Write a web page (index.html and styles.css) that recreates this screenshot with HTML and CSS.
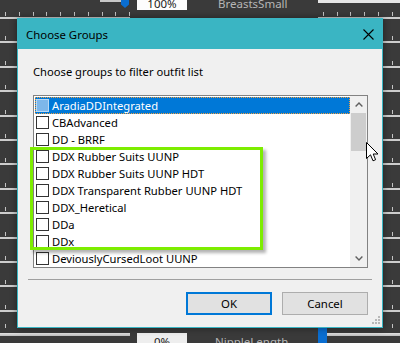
FILE: index.html
```html
<!DOCTYPE html>
<html lang="en">
<head>
    <meta charset="UTF-8">
    <title>Choose Groups</title>
    <link rel="stylesheet" href="styles.css">
</head>
<body>
    <div class="page">
        <!-- slider list behind the dialog -->
        <div class="strip-top">
            <span class="track-stub"></span>
            <span class="thumb"></span>
            <span class="value-box">100%</span>
            <span class="slider-label">BreastsSmall</span>
            <span class="edge-box"></span>
        </div>
        <div class="srow"><div class="slider left"><div class="ticks"></div><div class="track"></div></div><div class="slider right"><div class="ticks"></div><div class="track"></div></div></div>
        <div class="srow"><div class="slider left"><div class="ticks"></div><div class="track"></div></div><div class="slider right"><div class="ticks"></div><div class="track"></div></div></div>
        <div class="srow"><div class="slider left"><div class="ticks"></div><div class="track"></div></div><div class="slider right"><div class="ticks"></div><div class="track"></div></div></div>
        <div class="srow"><div class="slider left"><div class="ticks"></div><div class="track"></div></div><div class="slider right"><div class="ticks"></div><div class="track"></div></div></div>
        <div class="srow"><div class="slider left"><div class="ticks"></div><div class="track"></div></div><div class="slider right"><div class="ticks"></div><div class="track"></div></div></div>
        <div class="srow"><div class="slider left"><div class="ticks"></div><div class="track"></div></div><div class="slider right"><div class="ticks"></div><div class="track"></div></div></div>
        <div class="srow"><div class="slider left"><div class="ticks"></div><div class="track"></div></div><div class="slider right"><div class="ticks"></div><div class="track"></div></div></div>
        <div class="srow"><div class="slider left"><div class="ticks"></div><div class="track"></div></div><div class="slider right"><div class="ticks"></div><div class="track"></div></div></div>
        <div class="srow"><div class="slider left"><div class="ticks"></div><div class="track"></div></div><div class="slider right"><div class="ticks"></div><div class="track"></div></div></div>
        <div class="srow"><div class="slider left"><div class="ticks"></div><div class="track"></div></div><div class="slider right"><div class="ticks"></div><div class="track"></div></div></div>
        <div class="srow"><div class="slider left"><div class="ticks"></div><div class="track"></div></div><div class="slider right"><div class="ticks"></div><div class="track"></div></div></div>
        <div class="srow"><div class="slider left"><div class="ticks"></div><div class="track"></div></div><div class="slider right"><div class="ticks"></div><div class="track"></div></div></div>
        <div class="srow"><div class="slider left"><div class="ticks"></div><div class="track"></div></div><div class="slider right"><div class="ticks"></div><div class="track"></div></div></div>
        <div class="strip-bottom">
            <div class="slider left"><div class="ticks"></div><div class="track thick"></div></div>
            <span class="value-box low">0%</span>
            <span class="slider-label low">NippleLength</span>
            <div class="slider right">
                <div class="ticks"></div>
                <div class="thumb-row"><span class="thumb-block"></span><span class="track thick"></span></div>
            </div>
        </div>

        <!-- the dialog -->
        <div class="dialog">
            <div class="titlebar">
                <span class="title">Choose Groups</span>
                <svg class="close" width="11" height="11" viewBox="0 0 11 11">
                    <path d="M0.5 0.5 L10.5 10.5 M10.5 0.5 L0.5 10.5" stroke="#000" stroke-width="1.1" fill="none"/>
                </svg>
            </div>
            <div class="dialog-body">
                <div class="prompt">Choose groups to filter outfit list</div>
                <div class="listbox">
                    <div class="items">
                        <div class="item selected"><span class="check"></span><span>AradiaDDIntegrated</span></div>
                        <div class="item"><span class="check"></span><span>CBAdvanced</span></div>
                        <div class="item"><span class="check"></span><span>DD - BRRF</span></div>
                        <div class="item"><span class="check"></span><span>DDX Rubber Suits UUNP</span></div>
                        <div class="item"><span class="check"></span><span>DDX Rubber Suits UUNP HDT</span></div>
                        <div class="item"><span class="check"></span><span>DDX Transparent Rubber UUNP HDT</span></div>
                        <div class="item"><span class="check"></span><span>DDX_Heretical</span></div>
                        <div class="item"><span class="check"></span><span>DDa</span></div>
                        <div class="item"><span class="check"></span><span>DDx</span></div>
                        <div class="item"><span class="check"></span><span>DeviouslyCursedLoot UUNP</span></div>
                    </div>
                    <div class="scrollbar">
                        <div class="sb-button">
                            <svg width="8" height="5" viewBox="0 0 8 5"><polyline points="0.6,4.4 4,1 7.4,4.4" stroke="#606060" stroke-width="1.4" fill="none"/></svg>
                        </div>
                        <div class="sb-thumb"></div>
                        <div class="sb-track"></div>
                        <div class="sb-button">
                            <svg width="8" height="5" viewBox="0 0 8 5"><polyline points="0.6,0.6 4,4 7.4,0.6" stroke="#606060" stroke-width="1.4" fill="none"/></svg>
                        </div>
                    </div>
                </div>
                <div class="separator"></div>
                <div class="buttons">
                    <button class="btn default">OK</button>
                    <button class="btn">Cancel</button>
                </div>
            </div>
            <svg class="grip" width="9" height="9" viewBox="0 0 9 9">
                <rect x="6" y="0" width="2" height="2" fill="#b8b8b8"/>
                <rect x="3" y="3" width="2" height="2" fill="#b8b8b8"/>
                <rect x="6" y="3" width="2" height="2" fill="#b8b8b8"/>
                <rect x="0" y="6" width="2" height="2" fill="#b8b8b8"/>
                <rect x="3" y="6" width="2" height="2" fill="#b8b8b8"/>
                <rect x="6" y="6" width="2" height="2" fill="#b8b8b8"/>
            </svg>
        </div>

        <!-- annotation and mouse pointer on top -->
        <div class="highlight"></div>
        <svg class="cursor" width="13" height="20" viewBox="0 0 13 20">
            <path d="M0.5 0.5 L0.5 16.5 L4.5 12.8 L7 18.8 L9.6 17.7 L7.2 12 L12 12 Z" fill="#fff" stroke="#000" stroke-width="1" stroke-linejoin="miter"/>
        </svg>
    </div>
</body>
</html>
```

FILE: styles.css
```css
body {
    margin: 0;
    font-family: "Noto Sans", sans-serif;
    font-size: 11.2px;
}
.page {
    position: relative;
    width: 400px;
    height: 343px;
    overflow: hidden;
    background: #3a3a3a;
    display: flex;
    flex-direction: column;
}

/* background slider rows */
.strip-top {
    height: 11px;
    flex-shrink: 0;
    display: flex;
    align-items: flex-end;
}
.track-stub {
    align-self: flex-start;
    margin-left: 100px;
    width: 21px;
    height: 2px;
    background: #c8c8c8;
}
.thumb {
    width: 8px;
    height: 18px;
    margin-bottom: 3px;
    background: #0a6ed1;
    clip-path: polygon(0 0, 100% 0, 100% 80%, 50% 100%, 0 80%);
}
.value-box {
    width: 50px;
    height: 20px;
    margin-left: 8px;
    margin-bottom: 1px;
    box-sizing: border-box;
    padding-top: 6px;
    line-height: 16px;
    text-align: center;
    background: #fdfdfd;
    color: #222;
    font-size: 11.5px;
}
.slider-label {
    margin-left: 31px;
    margin-bottom: 1px;
    height: 20px;
    box-sizing: border-box;
    padding-top: 6px;
    line-height: 16px;
    color: #b6b6b6;
    font-size: 11.5px;
}
.edge-box {
    align-self: flex-start;
    margin-left: auto;
    width: 82px;
    height: 3px;
    background: #e6e6e6;
}
.srow {
    height: 24.4px;
    flex-shrink: 0;
    display: flex;
}
.slider {
    display: flex;
    flex-direction: column;
}
.slider.left {
    width: 130px;
}
.slider.right {
    width: 82px;
    margin-left: auto;
}
.ticks {
    height: 4px;
    margin-top: 1px;
    background: repeating-linear-gradient(to right, transparent 0 5px, #c4c4c4 5px 6px, transparent 6px 13.8px);
}
.slider.right .ticks {
    background: repeating-linear-gradient(to right, transparent 0 4.7px, #c4c4c4 4.7px 5.7px, transparent 5.7px 13.8px);
}
.track {
    height: 2px;
    margin-top: 1px;
    background: #cdcdcd;
}
.track.thick {
    height: 3px;
    background: linear-gradient(#e4e4e4, #bdbdbd);
}
.strip-bottom {
    flex: 1;
    display: flex;
}
.strip-bottom .ticks {
    margin-top: -4px;
}
.strip-bottom .slider.left .track {
    margin-top: 5px;
}
.value-box.low {
    margin-top: 5px;
    margin-left: 7px;
    height: 20px;
    padding-top: 1px;
    background: #eeeeee;
}
.slider-label.low {
    margin-top: 5px;
    margin-left: 28px;
    padding-top: 1px;
}
.thumb-row {
    display: flex;
    margin-top: 1px;
}
.thumb-block {
    width: 9px;
    height: 20px;
    margin-top: -6px;
    background: #0a6ed1;
}
.thumb-row .track {
    flex: 1;
    margin-top: 4px;
}

/* dialog */
.dialog {
    position: absolute;
    left: 17px;
    top: 18px;
    width: 366px;
    height: 310px;
    box-sizing: border-box;
    border: 1px solid #3ab5c3;
    background: #f0f0f0;
    box-shadow: 0 0 7px rgba(0, 0, 0, 0.45);
    display: flex;
    flex-direction: column;
}
.titlebar {
    height: 30px;
    flex-shrink: 0;
    background: #3ab5c3;
    display: flex;
    align-items: center;
    padding-left: 8px;
}
.title {
    color: #000;
    font-size: 11.4px;
}
.close {
    margin-left: auto;
    margin-right: 8px;
}
.dialog-body {
    display: flex;
    flex-direction: column;
    padding-top: 15px;
}
.prompt {
    margin-left: 15px;
    line-height: 15px;
    color: #000;
}
.listbox {
    margin-top: 16px;
    margin-left: 15px;
    width: 335px;
    height: 173px;
    box-sizing: border-box;
    border: 1px solid #828282;
    background: #fff;
    display: flex;
}
.items {
    flex: 1;
    padding: 1px 0 0 1px;
    overflow: hidden;
}
.item {
    height: 17px;
    display: flex;
    align-items: center;
    color: #000;
    white-space: nowrap;
    box-sizing: border-box;
}
.check {
    width: 13px;
    height: 13px;
    margin-left: 1px;
    margin-right: 3px;
    box-sizing: border-box;
    border: 1px solid #333;
    background: #fff;
    flex-shrink: 0;
}
.item.selected {
    background: #0078d7;
    color: #fff;
    border: 1px dotted #f0a040;
}
.item.selected .check {
    margin-left: 0;
    background: #7db7ea;
    border-color: #b9d9f5;
}
.scrollbar {
    width: 17px;
    background: #f0f0f0;
    display: flex;
    flex-direction: column;
}
.sb-button {
    height: 17px;
    display: flex;
    align-items: center;
    justify-content: center;
}
.sb-thumb {
    height: 38px;
    margin: 0 1px;
    background: #cdcdcd;
}
.sb-track {
    flex: 1;
}
.separator {
    height: 1px;
    margin: 11px 10px 0 10px;
    background: #a0a0a0;
}
.buttons {
    display: flex;
    justify-content: flex-end;
    gap: 10px;
    margin-top: 12px;
    padding-right: 14px;
}
.btn {
    width: 86px;
    height: 23px;
    box-sizing: border-box;
    border: 1px solid #adadad;
    background: #e1e1e1;
    color: #000;
    font-family: "Noto Sans", sans-serif;
    font-size: 11.4px;
    padding: 0;
}
.btn.default {
    border: 2px solid #0078d7;
}
.grip {
    position: absolute;
    right: 1px;
    bottom: 2px;
}

.highlight {
    position: absolute;
    left: 30px;
    top: 147px;
    width: 233px;
    height: 103px;
    box-sizing: border-box;
    border: 3px solid #7ded00;
    box-shadow: 3px 3px 3px rgba(0, 0, 0, 0.3);
}
.cursor {
    position: absolute;
    left: 366px;
    top: 142px;
}
```
